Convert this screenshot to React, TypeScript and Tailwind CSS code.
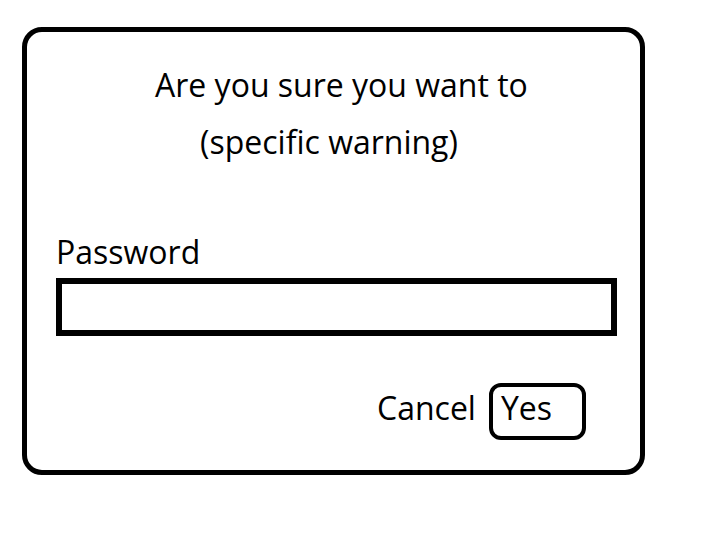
export default function App() {
  const font = { fontFamily: "'Open Sans', Lato, sans-serif" };
  return (
    <div className="w-[727px] h-[548px] bg-white overflow-hidden pt-[27px] pl-[22px]" style={font}>
      <div className="w-[623px] h-[448px] border-[5px] border-black rounded-[20px] flex flex-col items-start text-black text-[32px] leading-[40px]">
        <div className="mt-[33px] ml-[128px] whitespace-nowrap">Are you sure you want to</div>
        <div className="mt-[17px] ml-[173px] whitespace-nowrap">(specific warning)</div>
        <div className="mt-[70px] ml-[29px] whitespace-nowrap">Password</div>
        <div className="mt-[6px] ml-[29px] w-[561px] h-[58px] border-[6px] border-black" />
        <div className="mt-[47px] ml-[350px] flex items-start gap-[13px]">
          <div className="mt-[5px] whitespace-nowrap">Cancel</div>
          <div className="w-[97px] h-[57px] border-[4px] border-black rounded-[12px] pl-[8px] pt-[1px] whitespace-nowrap">Yes</div>
        </div>
      </div>
    </div>
  );
}
